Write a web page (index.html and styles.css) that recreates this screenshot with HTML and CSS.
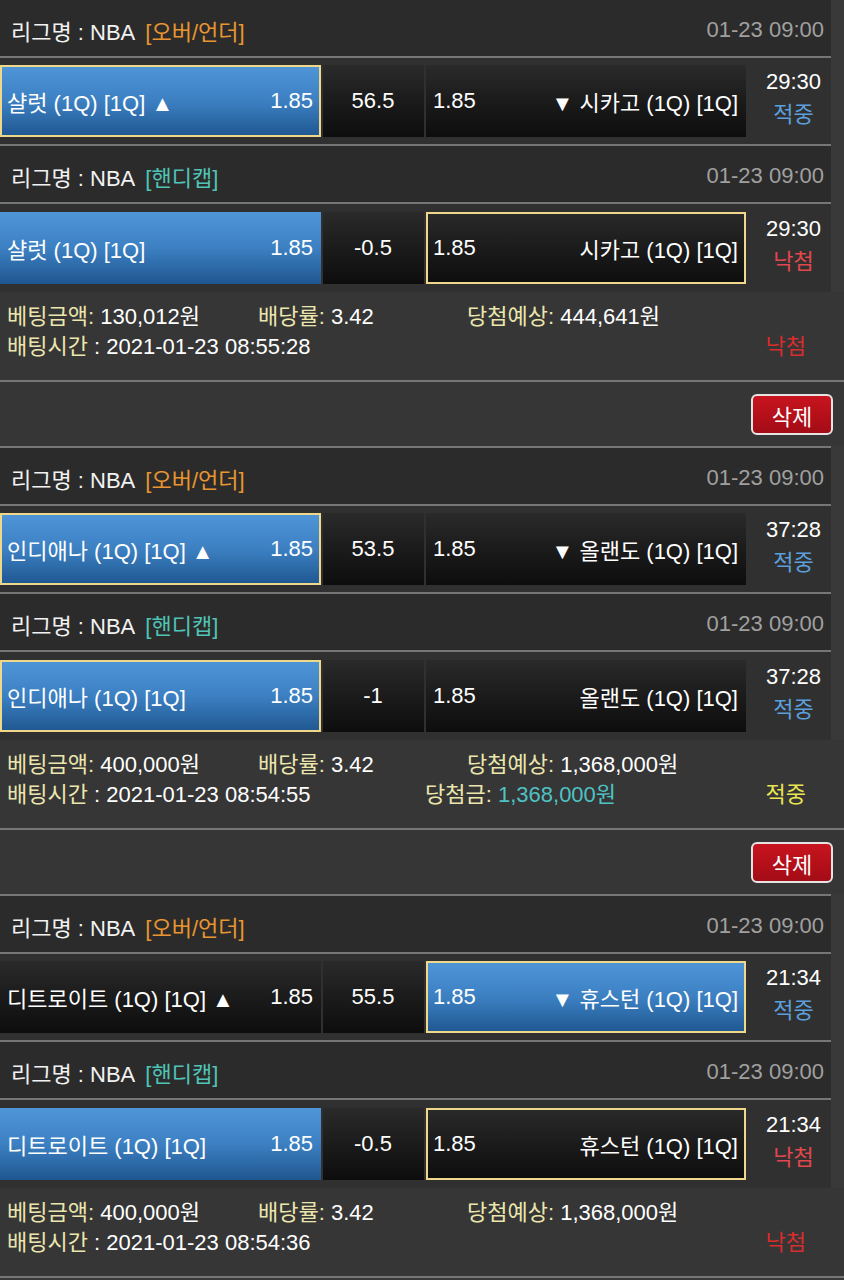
FILE: index.html
```html
<!DOCTYPE html>
<html lang="ko">
<head>
    <meta charset="UTF-8">
    <meta name="viewport" content="width=device-width, initial-scale=1.0">
    <title>배팅내역</title>
    <link rel="stylesheet" href="styles.css">
</head>
<body>
    <!-- 1 -->
    <div class="slip">
        <div class="board">
            <div class="league">
                <span>리그명 : NBA<em class="type over">[오버/언더]</em></span>
                <span class="date">01-23 09:00</span>
            </div>
            <div class="bet">
                <div class="pick blue picked"><span>샬럿 (1Q) [1Q] ▲</span><span>1.85</span></div>
                <div class="pick mid">56.5</div>
                <div class="pick away"><span>1.85</span><span>▼ 시카고 (1Q) [1Q]</span></div>
                <div class="result"><div>29:30</div><div class="hit">적중</div></div>
            </div>
            <div class="league">
                <span>리그명 : NBA<em class="type handi">[핸디캡]</em></span>
                <span class="date">01-23 09:00</span>
            </div>
            <div class="bet">
                <div class="pick blue"><span>샬럿 (1Q) [1Q]</span><span>1.85</span></div>
                <div class="pick mid">-0.5</div>
                <div class="pick away picked"><span>1.85</span><span>시카고 (1Q) [1Q]</span></div>
                <div class="result"><div>29:30</div><div class="miss">낙첨</div></div>
            </div>
        </div>
        <div class="summary">
            <div class="sum-row first">
                <span><b>베팅금액:</b> 130,012원</span>
                <span><b>배당률:</b> 3.42</span>
                <span><b>당첨예상:</b> 444,641원</span>
            </div>
            <div class="sum-row second">
                <span><b>배팅시간</b> : 2021-01-23 08:55:28</span>
                <span></span>
                <span class="state lost">낙첨</span>
            </div>
        </div>
        <div class="actions"><button>삭제</button></div>
    </div>

    <!-- 2 -->
    <div class="slip">
        <div class="board">
            <div class="league">
                <span>리그명 : NBA<em class="type over">[오버/언더]</em></span>
                <span class="date">01-23 09:00</span>
            </div>
            <div class="bet">
                <div class="pick blue picked"><span>인디애나 (1Q) [1Q] ▲</span><span>1.85</span></div>
                <div class="pick mid">53.5</div>
                <div class="pick away"><span>1.85</span><span>▼ 올랜도 (1Q) [1Q]</span></div>
                <div class="result"><div>37:28</div><div class="hit">적중</div></div>
            </div>
            <div class="league">
                <span>리그명 : NBA<em class="type handi">[핸디캡]</em></span>
                <span class="date">01-23 09:00</span>
            </div>
            <div class="bet">
                <div class="pick blue picked"><span>인디애나 (1Q) [1Q]</span><span>1.85</span></div>
                <div class="pick mid">-1</div>
                <div class="pick away"><span>1.85</span><span>올랜도 (1Q) [1Q]</span></div>
                <div class="result"><div>37:28</div><div class="hit">적중</div></div>
            </div>
        </div>
        <div class="summary">
            <div class="sum-row first">
                <span><b>베팅금액:</b> 400,000원</span>
                <span><b>배당률:</b> 3.42</span>
                <span><b>당첨예상:</b> 1,368,000원</span>
            </div>
            <div class="sum-row second">
                <span><b>배팅시간</b> : 2021-01-23 08:54:55</span>
                <span><b>당첨금:</b> <i class="won">1,368,000원</i></span>
                <span class="state won-state">적중</span>
            </div>
        </div>
        <div class="actions"><button>삭제</button></div>
    </div>

    <!-- 3 -->
    <div class="slip">
        <div class="board">
            <div class="league">
                <span>리그명 : NBA<em class="type over">[오버/언더]</em></span>
                <span class="date">01-23 09:00</span>
            </div>
            <div class="bet">
                <div class="pick"><span>디트로이트 (1Q) [1Q] ▲</span><span>1.85</span></div>
                <div class="pick mid">55.5</div>
                <div class="pick away blue picked"><span>1.85</span><span>▼ 휴스턴 (1Q) [1Q]</span></div>
                <div class="result"><div>21:34</div><div class="hit">적중</div></div>
            </div>
            <div class="league">
                <span>리그명 : NBA<em class="type handi">[핸디캡]</em></span>
                <span class="date">01-23 09:00</span>
            </div>
            <div class="bet">
                <div class="pick blue"><span>디트로이트 (1Q) [1Q]</span><span>1.85</span></div>
                <div class="pick mid">-0.5</div>
                <div class="pick away picked"><span>1.85</span><span>휴스턴 (1Q) [1Q]</span></div>
                <div class="result"><div>21:34</div><div class="miss">낙첨</div></div>
            </div>
        </div>
        <div class="summary">
            <div class="sum-row first">
                <span><b>베팅금액:</b> 400,000원</span>
                <span><b>배당률:</b> 3.42</span>
                <span><b>당첨예상:</b> 1,368,000원</span>
            </div>
            <div class="sum-row second">
                <span><b>배팅시간</b> : 2021-01-23 08:54:36</span>
                <span></span>
                <span class="state lost">낙첨</span>
            </div>
        </div>
    </div>
</body>
</html>
```

FILE: styles.css
```css
* {
    margin: 0;
    padding: 0;
    box-sizing: border-box;
}

body {
    font-family: "Liberation Sans", "Noto Sans CJK KR", sans-serif;
    font-size: 22px;
    color: #fff;
    background: #393939;
}

.board {
    width: 831px;
    background: #2b2b2b;
}

.slip + .slip .board {
    border-top: 2px solid #767676;
}

.league {
    height: 58px;
    border-bottom: 2px solid #767676;
    display: flex;
    align-items: center;
    justify-content: space-between;
    padding: 4px 7px 0 11px;
    color: #f2f2f2;
}

.type {
    font-style: normal;
    margin-left: 10px;
}

.over { color: #e9962f; }
.handi { color: #4fc4b6; }

.date {
    color: #a0a0a0;
}

.bet {
    display: flex;
    gap: 2px;
    padding: 7px 0;
    background: #303030;
    border-bottom: 2px solid #767676;
}

.bet:last-child {
    border-bottom: none;
    padding: 8px 0;
}

.pick {
    height: 72px;
    width: 321px;
    display: flex;
    align-items: center;
    justify-content: space-between;
    padding: 0 8px 0 7px;
    background: linear-gradient(#2a2a2a, #1b1b1b 50%, #0d0d0d);
    white-space: nowrap;
}

.pick.mid {
    width: 101px;
    justify-content: center;
}

.pick.away {
    width: 320px;
}

.pick.blue {
    background: linear-gradient(#4f96d9, #3c80c2 50%, #1f5690);
}

.pick.picked {
    box-shadow: inset 0 0 0 2px #efd889;
}

.result {
    flex: 1;
    text-align: center;
    line-height: 33px;
    padding-left: 8px;
}

.hit { color: #5b9fdb; }
.miss { color: #e2474d; }

.summary {
    background: #363636;
    padding: 10px 0 18px 7px;
    border-bottom: 2px solid #767676;
    line-height: 30px;
}

.sum-row {
    display: grid;
}

.sum-row.first {
    grid-template-columns: 251px 209px 1fr;
}

.sum-row.second {
    grid-template-columns: 418px 1fr auto;
}

.summary b {
    font-weight: normal;
    color: #ece6ad;
}

.won {
    font-style: normal;
    color: #4ec3c3;
}

.state {
    padding-right: 38px;
}

.lost { color: #d92c2c; }
.won-state { color: #e9e452; }

.actions {
    height: 64px;
    background: #363636;
    display: flex;
    justify-content: flex-end;
    align-items: flex-start;
    padding: 12px 11px 0 0;
}

.actions button {
    width: 82px;
    height: 41px;
    border: 2px solid #e4e4e4;
    border-radius: 6px;
    background: linear-gradient(#c8141f, #a30c16);
    color: #fff;
    font-family: inherit;
    font-size: 22px;
}
```
